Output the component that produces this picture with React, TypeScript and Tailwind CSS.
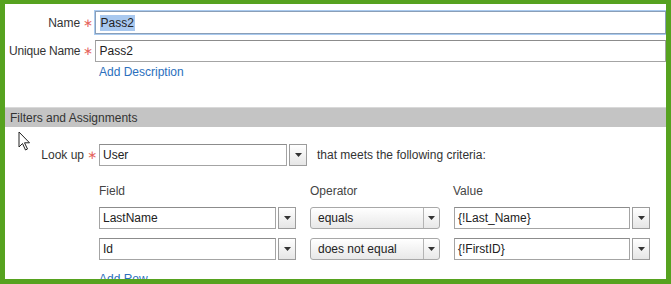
import React from 'react';

const font = "font-['Liberation_Sans',Arial,sans-serif]";

function Star() {
  return (
    <span className="w-[15px] pl-[1px] text-center text-[12px] leading-none text-[#e5625c] font-['DejaVu_Sans',sans-serif]">
      ∗
    </span>
  );
}

function Arrow() {
  return (
    <svg width="7" height="4" viewBox="0 0 7 4">
      <path d="M0 0 H7 L3.5 4 Z" fill="#333" />
    </svg>
  );
}

function DropButton() {
  return (
    <div className="ml-[2px] w-[18px] h-[22px] border border-[#9c9c9c] bg-gradient-to-b from-white to-[#e6e6e6] flex items-center justify-center shrink-0">
      <Arrow />
    </div>
  );
}

function TextBox({ value, width }: { value: string; width: string }) {
  return (
    <div className={`${width} h-[22px] border border-[#a4a4a4] border-t-[#8c8c8c] bg-white pl-[3px] flex items-center text-[#222] shrink-0`}>
      {value}
    </div>
  );
}

function OperatorSelect({ value }: { value: string }) {
  return (
    <div className="ml-[14px] w-[130px] h-[22px] rounded-[3px] border border-[#a8a8a8] bg-gradient-to-b from-white to-[#e8e8e8] flex items-center text-[#222] shrink-0">
      <span className="flex-1 pl-[7px]">{value}</span>
      <span className="w-[16px] h-full border-l border-[#b4b4b4] flex items-center justify-center">
        <Arrow />
      </span>
    </div>
  );
}

function CriteriaRow({ field, op, value }: { field: string; op: string; value: string }) {
  return (
    <div className="flex items-center pl-[94px]">
      <TextBox value={field} width="w-[177px]" />
      <DropButton />
      <OperatorSelect value={op} />
      <div className="ml-[14px] flex items-center">
        <TextBox value={value} width="w-[176px]" />
        <DropButton />
      </div>
    </div>
  );
}

export default function App() {
  return (
    <div className={`relative w-[671px] h-[284px] overflow-hidden bg-white border-[#56a21f] border-t-4 border-l-[5px] border-r-[5px] border-b-[5px] text-[12px] leading-[14px] text-[#333] ${font}`}>
      <div className="pt-[7px]">
        {/* Name */}
        <div className="flex items-center">
          <span className="w-[79px] text-right">Name</span>
          <Star />
          <div className="w-[600px] h-[23px] border border-[#8a9fb8] shadow-[0_0_0_1px_#a9caef] bg-white pl-[4px] flex items-center text-[#222]">
            <span className="bg-[#a8c8ef] px-[1px] py-[1px]">Pass2</span>
          </div>
        </div>

        {/* Unique Name */}
        <div className="flex items-center mt-[6px]">
          <span className="w-[79px] text-right tracking-[-0.2px]">Unique Name</span>
          <Star />
          <div className="w-[600px] h-[22px] border border-[#a4a4a4] border-t-[#8c8c8c] bg-white pl-[4px] flex items-center text-[#222]">
            Pass2
          </div>
        </div>

        <div className="mt-[3px] pl-[94px] text-[#2b6fbd]">Add Description</div>

        {/* Section header */}
        <div className="mt-[28px] h-[20px] bg-[#c4c4c4] border-t border-[#d9d9d9] pl-[5px] flex items-center text-[#333]">
          Filters and Assignments
        </div>

        {/* Look up */}
        <div className="flex items-center mt-[17px]">
          <span className="w-[79px] text-right">Look up</span>
          <Star />
          <TextBox value="User" width="w-[188px]" />
          <DropButton />
          <span className="ml-[10px] text-[#333]">that meets the following criteria:</span>
        </div>

        {/* Column headers */}
        <div className="flex mt-[18px] pl-[94px] text-[#444]">
          <span className="w-[211px]">Field</span>
          <span className="w-[143px]">Operator</span>
          <span>Value</span>
        </div>

        <div className="mt-[9px]">
          <CriteriaRow field="LastName" op="equals" value="{!Last_Name}" />
        </div>
        <div className="mt-[9px]">
          <CriteriaRow field="Id" op="does not equal" value="{!FirstID}" />
        </div>

        {/* cut off by the frame, as in the screenshot */}
        <div className="mt-[12px] pl-[94px] text-[#2b6fbd]">Add Row</div>
      </div>

      {/* mouse cursor */}
      <svg className="absolute left-[13px] top-[127px]" width="14" height="21" viewBox="0 0 14 21">
        <path d="M1 1 L1 16 L4.5 12.5 L7.5 19 L9.5 18 L6.5 11.8 L11.5 11.8 Z" fill="white" stroke="#222" strokeWidth="1" strokeLinejoin="round" />
      </svg>
    </div>
  );
}
